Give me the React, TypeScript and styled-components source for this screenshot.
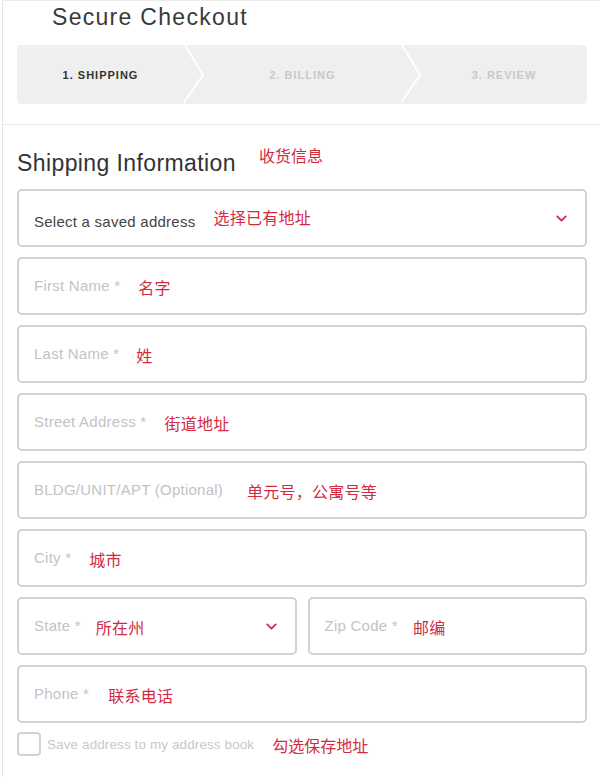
import React from 'react'
import styled, { createGlobalStyle } from 'styled-components'
import { ChevronDown } from 'lucide-react'

const GlobalStyle = createGlobalStyle`
  html, body {
    margin: 0;
    padding: 0;
    background: #fff;
  }
  body {
    font-family: 'Liberation Sans', Arial, sans-serif;
    color: #333;
  }
`

const Page = styled.div`
  margin-left: 2px;
  border-left: 1px solid #e4e4e4;
  border-top: 1px solid #ececec;
  min-height: 777px;
  box-sizing: border-box;
`

const Header = styled.div`
  padding: 3px 0 20px 14px;
  border-bottom: 1px solid #e8e8e8;
`

const Title = styled.h1`
  margin: 0 0 0 35px;
  height: 41px;
  font-size: 23px;
  font-weight: 400;
  letter-spacing: 1.3px;
  color: #3a3a3a;
  line-height: 26px;
`

const Steps = styled.div`
  display: flex;
  align-items: stretch;
  width: 570px;
  height: 59px;
  background: #efefef;
  border-radius: 4px;
  overflow: hidden;
`

const Step = styled.div<{ $w: number; $active?: boolean }>`
  flex: none;
  width: ${({ $w }) => $w}px;
  display: flex;
  align-items: center;
  justify-content: center;
  font-size: 11px;
  font-weight: 700;
  letter-spacing: 1px;
  color: ${({ $active }) => ($active ? '#333' : '#c9c9c9')};
`

const Sep = styled.svg`
  flex: none;
  width: 20px;
  height: 59px;
  display: block;
`

const Form = styled.div`
  padding: 18px 13px 0 14px;
  display: flex;
  flex-direction: column;
  gap: 10px;
`

const Heading = styled.div`
  display: flex;
  align-items: flex-start;
  height: 46px;
  margin-bottom: -10px;
`

const HeadingText = styled.h2`
  margin: 7px 0 0;
  font-size: 23px;
  font-weight: 400;
  letter-spacing: 0.4px;
  color: #333;
  line-height: 26px;
`

const Note = styled.span<{ $gap: number; $dy?: number }>`
  margin-left: ${({ $gap }) => $gap}px;
  font-family: 'Noto Sans CJK SC', sans-serif;
  font-size: 16px;
  color: #d42a3f;
  position: relative;
  top: ${({ $dy }) => $dy ?? 1}px;
  white-space: nowrap;
`

const Row = styled.div`
  display: flex;
  gap: 11px;
`

const Field = styled.div<{ $pt?: number; $half?: boolean }>`
  flex: ${({ $half }) => ($half ? '1 1 0' : 'none')};
  height: 58px;
  box-sizing: border-box;
  border: 2px solid #d2d2d2;
  border-radius: 5px;
  padding: ${({ $pt }) => $pt ?? 0}px 15px 0 15px;
  display: flex;
  align-items: center;
  font-size: 15px;
  letter-spacing: 0.25px;
`

const Placeholder = styled.span<{ $dark?: boolean }>`
  color: ${({ $dark }) => ($dark ? '#444' : '#c3c3c3')};
  white-space: nowrap;
  position: relative;
  top: -1px;
`

const Caret = styled(ChevronDown)<{ $dy?: number }>`
  margin-left: auto;
  margin-top: ${({ $dy }) => $dy ?? 0}px;
  color: #c42c5c;
`

const CheckRow = styled.div`
  display: flex;
  align-items: center;
  margin-top: -1px;
`

const Box = styled.div`
  width: 24px;
  height: 24px;
  box-sizing: border-box;
  border: 2px solid #d2d2d2;
  border-radius: 4px;
`

const CheckLabel = styled.span`
  margin-left: 6px;
  font-size: 13.5px;
  letter-spacing: 0.1px;
  color: #c8c8c8;
`

const Chevron = () => (
  <Sep viewBox="0 0 20 59" preserveAspectRatio="none">
    <rect x="0" y="0" width="20" height="59" fill="#efefef" />
    <polyline points="1,0 19,30 -1,59" fill="none" stroke="#fff" strokeWidth="2" />
  </Sep>
)

type Input = { label: string; note: string; gap: number }

const fields: Input[] = [
  { label: 'First Name *', note: '名字', gap: 18 },
  { label: 'Last Name *', note: '姓', gap: 17 },
  { label: 'Street Address *', note: '街道地址', gap: 18 },
  { label: 'BLDG/UNIT/APT (Optional)', note: '单元号，公寓号等', gap: 24 },
  { label: 'City *', note: '城市', gap: 18 },
]

export default function App() {
  return (
    <>
      <GlobalStyle />
      <Page>
        <Header>
          <Title>Secure Checkout</Title>
          <Steps>
            <Step $w={167} $active>1. SHIPPING</Step>
            <Chevron />
            <Step $w={197}>2. BILLING</Step>
            <Chevron />
            <Step $w={166}>3. REVIEW</Step>
          </Steps>
        </Header>
        <Form>
          <Heading>
            <HeadingText>Shipping Information</HeadingText>
            <Note $gap={23} $dy={0}>收货信息</Note>
          </Heading>
          <Field $pt={8}>
            <Placeholder $dark>Select a saved address</Placeholder>
            <Note $gap={18} $dy={-5}>选择已有地址</Note>
            <Caret size={17} strokeWidth={2.5} $dy={-8} />
          </Field>
          {fields.map((f) => (
            <Field key={f.label}>
              <Placeholder>{f.label}</Placeholder>
              <Note $gap={f.gap}>{f.note}</Note>
            </Field>
          ))}
          <Row>
            <Field $half>
              <Placeholder>State *</Placeholder>
              <Note $gap={15}>所在州</Note>
              <Caret size={17} strokeWidth={2.5} />
            </Field>
            <Field $half>
              <Placeholder>Zip Code *</Placeholder>
              <Note $gap={15}>邮编</Note>
            </Field>
          </Row>
          <Field>
            <Placeholder>Phone *</Placeholder>
            <Note $gap={19}>联系电话</Note>
          </Field>
          <CheckRow>
            <Box />
            <CheckLabel>Save address to my address book</CheckLabel>
            <Note $gap={18}>勾选保存地址</Note>
          </CheckRow>
        </Form>
      </Page>
    </>
  )
}
